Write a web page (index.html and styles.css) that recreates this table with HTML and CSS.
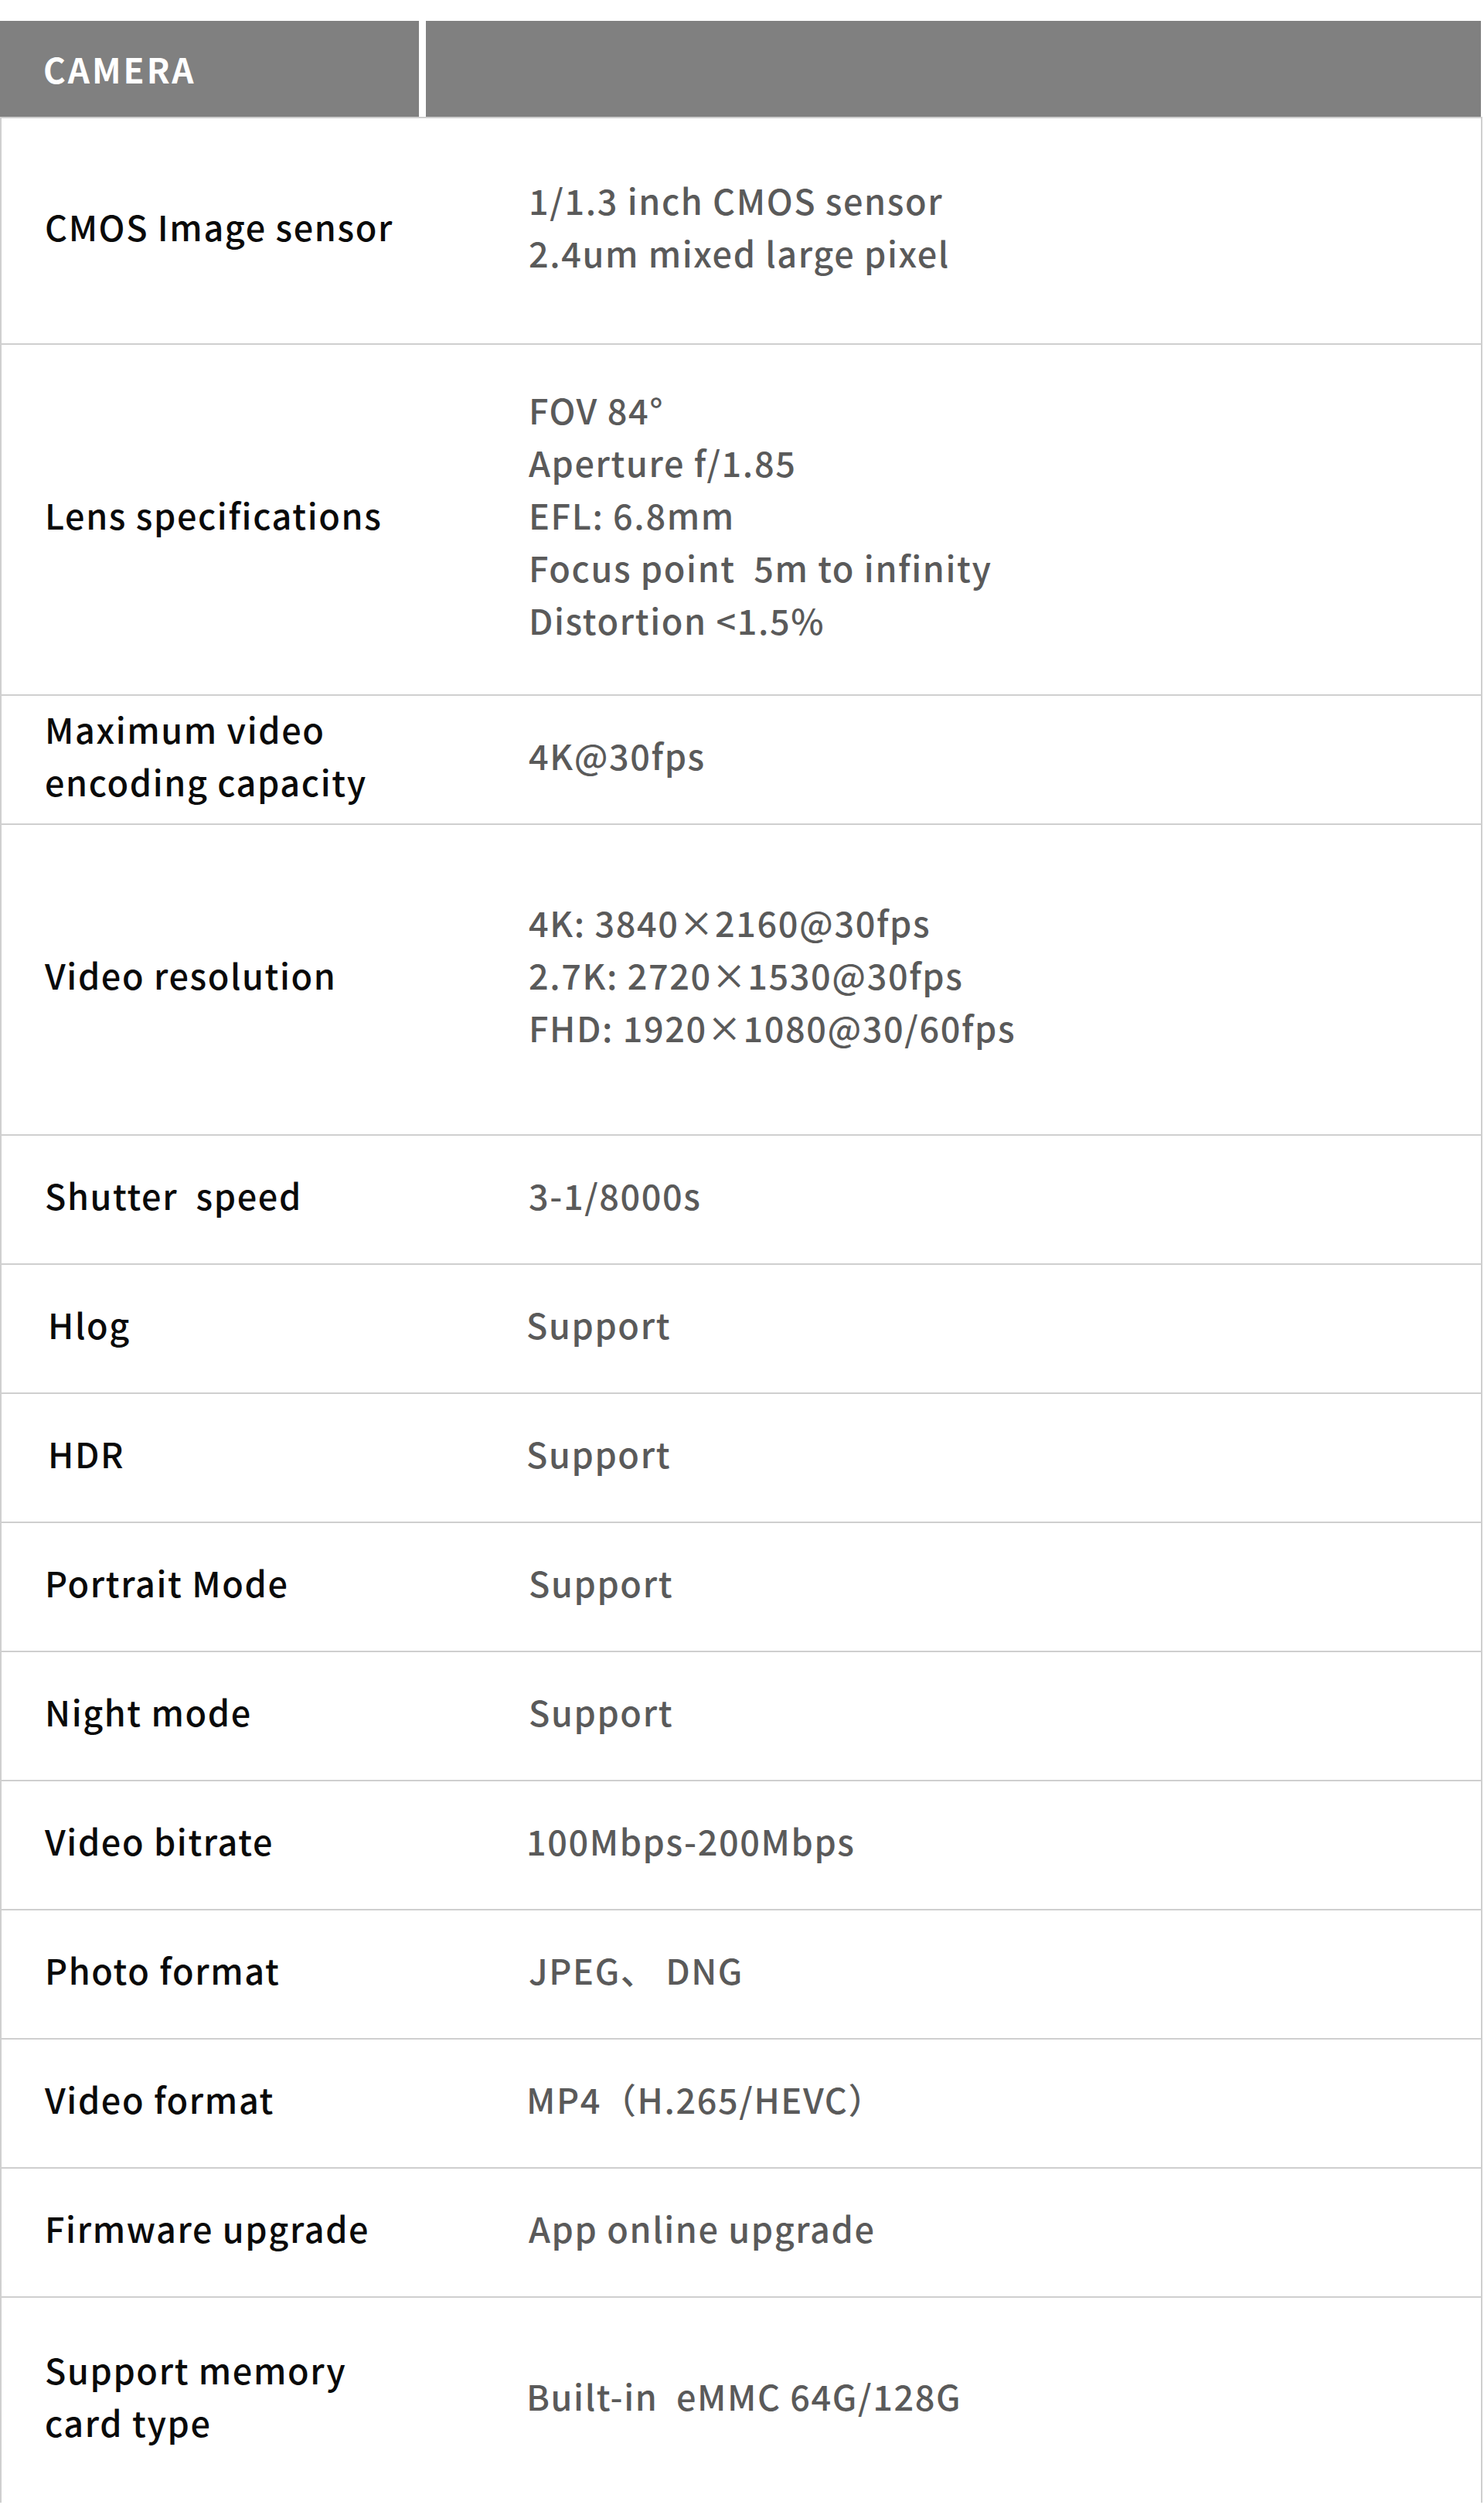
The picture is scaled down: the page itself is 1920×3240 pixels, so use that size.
FILE: index.html
```html
<!DOCTYPE html>
<html lang="en">
<head>
<meta charset="utf-8">
<title>Camera specifications</title>
<link rel="stylesheet" href="styles.css">
</head>
<body>
<div class="spec">
  <div class="spec-head">
    <div class="head-cell head-title">CAMERA</div>
    <div class="head-cell"></div>
  </div>

  <div class="row h293">
    <div class="label">CMOS Image sensor</div>
    <div class="value">1/1.3 inch CMOS sensor<br>2.4um mixed large pixel</div>
  </div>
  <div class="row h454">
    <div class="label">Lens specifications</div>
    <div class="value">FOV 84°<br>Aperture f/1.85<br>EFL: 6.8mm<br>Focus point&nbsp; 5m to infinity<br>Distortion &lt;1.5%</div>
  </div>
  <div class="row">
    <div class="label">Maximum video<br>encoding capacity</div>
    <div class="value">4K@30fps</div>
  </div>
  <div class="row h402">
    <div class="label">Video resolution</div>
    <div class="value">4K: 3840×2160@30fps<br>2.7K: 2720×1530@30fps<br>FHD: 1920×1080@30/60fps</div>
  </div>
  <div class="row">
    <div class="label">Shutter&nbsp; speed</div>
    <div class="value">3-1/8000s</div>
  </div>
  <div class="row">
    <div class="label label-indent">Hlog</div>
    <div class="value value-outdent">Support</div>
  </div>
  <div class="row">
    <div class="label label-indent">HDR</div>
    <div class="value value-outdent">Support</div>
  </div>
  <div class="row">
    <div class="label">Portrait Mode</div>
    <div class="value">Support</div>
  </div>
  <div class="row">
    <div class="label">Night mode</div>
    <div class="value">Support</div>
  </div>
  <div class="row">
    <div class="label">Video bitrate</div>
    <div class="value value-outdent">100Mbps-200Mbps</div>
  </div>
  <div class="row">
    <div class="label">Photo format</div>
    <div class="value">JPEG、 DNG</div>
  </div>
  <div class="row">
    <div class="label">Video format</div>
    <div class="value value-outdent">MP4（H.265/HEVC）</div>
  </div>
  <div class="row">
    <div class="label">Firmware upgrade</div>
    <div class="value">App online upgrade</div>
  </div>
  <div class="row h267">
    <div class="label">Support memory<br>card type</div>
    <div class="value value-outdent">Built-in&nbsp; eMMC 64G/128G</div>
  </div>
</div>
</body>
</html>
```

FILE: styles.css
```css
html, body {
  margin: 0;
  padding: 0;
  background: #ffffff;
}

body {
  font-family: "Noto Sans CJK SC", "Noto Sans", sans-serif;
  font-size: 45px;
  line-height: 68px;
  color: #111111;
}

.spec {
  padding-top: 27px;
}

.spec-head {
  display: grid;
  grid-template-columns: 542px 1fr;
  column-gap: 9px;
  height: 124px;
  padding-right: 4px;
}

.head-cell {
  background: #808080;
}

.head-title {
  display: flex;
  align-items: center;
  padding-left: 56px;
  color: #ffffff;
  font-weight: 700;
  font-size: 44px;
  letter-spacing: 3px;
}

.row {
  display: grid;
  grid-template-columns: 626px 1fr;
  align-items: center;
  height: 167px;
  box-sizing: border-box;
  padding-left: 56px;
  padding-bottom: 12px;
  border-left: 2px solid #cfcfcf;
  border-right: 2px solid #cfcfcf;
  border-top: 2px solid #cfcfcf;
  margin-right: 2px;
}

.row.h293 { height: 293px; }
.row.h454 { height: 454px; }
.row.h402 { height: 402px; }
.row.h267 { height: 267px; }

.label {
  color: #0a0a0a;
  font-weight: 500;
  letter-spacing: 1.6px;
}

.label-indent {
  padding-left: 4px;
}

.value {
  color: #5a5a5a;
  font-weight: 500;
  letter-spacing: 1.6px;
}

.value-outdent {
  margin-left: -3px;
}
```
